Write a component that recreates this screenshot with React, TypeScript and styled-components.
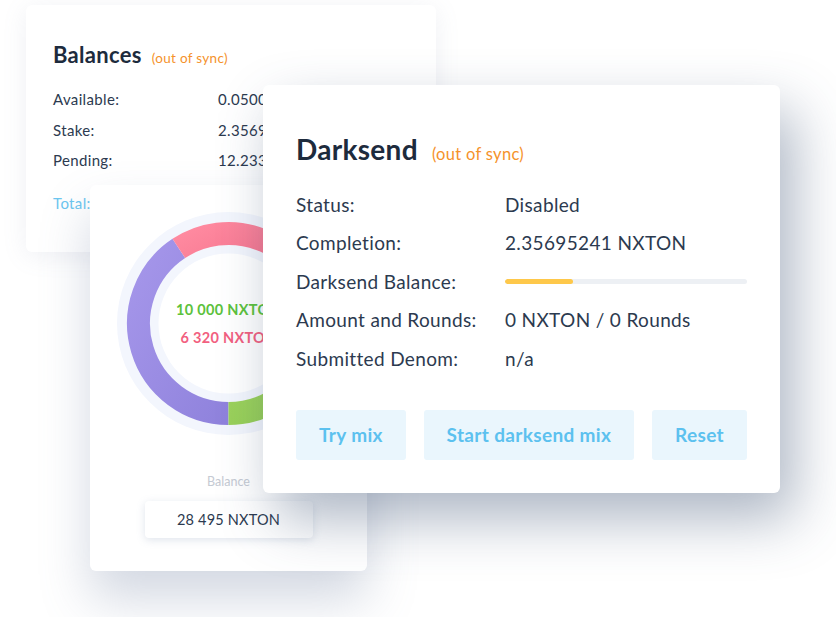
import React from "react";
import styled, { createGlobalStyle } from "styled-components";

const Global = createGlobalStyle`
  html, body { margin: 0; padding: 0; background: #ffffff; }
  body { font-family: Lato, "Open Sans", sans-serif; color: #2c3a4f; }
`;

const Stage = styled.div`
  position: relative;
  width: 836px;
  height: 617px;
  overflow: hidden;
  background: #ffffff;
`;

const Card = styled.div<{ $x: number; $y: number; $w: number; $h: number; $z: number }>`
  position: absolute;
  left: ${(p) => p.$x}px;
  top: ${(p) => p.$y}px;
  width: ${(p) => p.$w}px;
  height: ${(p) => p.$h}px;
  z-index: ${(p) => p.$z};
  background: #ffffff;
  border-radius: 6px;
  box-sizing: border-box;
`;

const BalancesCard = styled(Card)`
  padding: 37px 27px 0 27px;
  box-shadow: 0 4px 24px rgba(120, 135, 165, 0.12);
`;

const ChartCard = styled(Card)`
  display: flex;
  flex-direction: column;
  align-items: center;
  padding-top: 27px;
  box-shadow: 0 28px 50px rgba(110, 125, 160, 0.3);
`;

const DarkCard = styled(Card)`
  padding: 47px 33px 33px 33px;
  display: flex;
  flex-direction: column;
  box-shadow: 14px 26px 56px rgba(60, 80, 115, 0.42);
`;

const TitleRow = styled.div`
  display: flex;
  align-items: baseline;
`;

const Title = styled.h2<{ $size: number }>`
  margin: 0;
  font-size: ${(p) => p.$size}px;
  line-height: ${(p) => Math.round(p.$size * 1.2)}px;
  font-weight: 700;
  letter-spacing: 0.3px;
  color: #1d2b3d;
`;

const Sync = styled.span<{ $size: number; $gap: number }>`
  margin-left: ${(p) => p.$gap}px;
  font-size: ${(p) => p.$size}px;
  letter-spacing: 0.3px;
  color: #f5922b;
`;

const InfoGrid = styled.div<{ $col: number; $row: number; $size: number; $top: number }>`
  display: grid;
  grid-template-columns: ${(p) => p.$col}px 1fr;
  grid-auto-rows: ${(p) => p.$row}px;
  align-items: center;
  margin-top: ${(p) => p.$top}px;
  font-size: ${(p) => p.$size}px;
  letter-spacing: 0.35px;
  color: #2c3a4f;
  white-space: nowrap;
`;

const Cell = styled.div<{ $accent?: boolean }>`
  color: ${(p) => (p.$accent ? "#6cc6ef" : "inherit")};
`;

const TotalGrid = styled(InfoGrid)``;

const Track = styled.div`
  height: 5px;
  border-radius: 3px;
  background: #edf0f4;
  overflow: hidden;
`;

const Fill = styled.div`
  height: 100%;
  border-radius: 3px;
  background: #fec84a;
`;

const Buttons = styled.div`
  display: flex;
  justify-content: space-between;
  margin-top: 32px;
`;

const Button = styled.button`
  height: 50px;
  padding: 0 23px;
  border: none;
  border-radius: 3px;
  background: #eaf6fd;
  color: #5cc1ef;
  font-family: Lato, "Open Sans", sans-serif;
  font-size: 19px;
  letter-spacing: 0.35px;
  font-weight: 700;
  cursor: pointer;
`;

const DonutWrap = styled.div`
  position: relative;
  width: 223px;
  height: 223px;
`;

const DonutText = styled.div`
  position: absolute;
  inset: 0;
  display: flex;
  flex-direction: column;
  align-items: center;
  justify-content: center;
  gap: 10px;
  font-size: 14.5px;
  letter-spacing: 0.3px;
  font-weight: 700;
`;

const Amount = styled.div<{ $color: string }>`
  color: ${(p) => p.$color};
  line-height: 18px;
`;

const BalanceLabel = styled.div`
  margin-top: 39px;
  font-size: 12.5px;
  color: #c5cad3;
  line-height: 15px;
`;

const BalanceBox = styled.div`
  margin-top: 12px;
  width: 168px;
  height: 37px;
  display: flex;
  align-items: center;
  justify-content: center;
  border-radius: 4px;
  background: #ffffff;
  box-shadow: 0 2px 8px rgba(110, 130, 170, 0.22);
  font-size: 14.5px;
  letter-spacing: 0.2px;
  color: #2c3a4f;
`;

function arc(cx: number, cy: number, r: number, a0: number, a1: number) {
  const p = (a: number) => {
    const rad = ((a - 90) * Math.PI) / 180;
    return [cx + r * Math.cos(rad), cy + r * Math.sin(rad)];
  };
  let sweep = a1 - a0;
  if (sweep < 0) sweep += 360;
  const [x0, y0] = p(a0);
  const [x1, y1] = p(a1);
  return `M ${x0} ${y0} A ${r} ${r} 0 ${sweep > 180 ? 1 : 0} 1 ${x1} ${y1}`;
}

const Donut = () => {
  const c = 111.5;
  const r = 90;
  return (
    <DonutWrap>
      <svg width="223" height="223" viewBox="0 0 223 223">
        <defs>
          <linearGradient id="gp" x1="0" y1="0" x2="1" y2="1">
            <stop offset="0" stopColor="#a596ea" />
            <stop offset="1" stopColor="#8f82dc" />
          </linearGradient>
          <linearGradient id="gk" x1="0" y1="0" x2="1" y2="1">
            <stop offset="0" stopColor="#ff8aa0" />
            <stop offset="1" stopColor="#ec5f7d" />
          </linearGradient>
          <linearGradient id="gg" x1="0" y1="0" x2="1" y2="1">
            <stop offset="0" stopColor="#a6d863" />
            <stop offset="1" stopColor="#8fcb52" />
          </linearGradient>
        </defs>
        <circle cx={c} cy={c} r={111.5} fill="#f3f6fd" />
        <path d={arc(c, c, r, 180, 326.5)} stroke="url(#gp)" strokeWidth="23" fill="none" />
        <path d={arc(c, c, r, 326.5, 80)} stroke="url(#gk)" strokeWidth="23" fill="none" />
        <path d={arc(c, c, r, 80, 180)} stroke="url(#gg)" strokeWidth="23" fill="none" />
        <circle cx={c} cy={c} r={70} fill="#ffffff" />
      </svg>
      <DonutText>
        <Amount $color="#5cc23c">10 000 NXTON</Amount>
        <Amount $color="#f2607f">6 320 NXTON</Amount>
      </DonutText>
    </DonutWrap>
  );
};

const balances = [
  ["Available:", "0.05000000 NXTON"],
  ["Stake:", "2.35695241 NXTON"],
  ["Pending:", "12.23300000 NXTON"],
];

export default function App() {
  const progress = 28;
  return (
    <Stage>
      <Global />
      <BalancesCard $x={26} $y={5} $w={410} $h={247} $z={1}>
        <TitleRow>
          <Title $size={22}>Balances</Title>
          <Sync $size={13.5} $gap={10}>(out of sync)</Sync>
        </TitleRow>
        <InfoGrid $col={165} $row={30.5} $size={15} $top={16}>
          {balances.map(([l, v]) => (
            <React.Fragment key={l}>
              <Cell>{l}</Cell>
              <Cell>{v}</Cell>
            </React.Fragment>
          ))}
        </InfoGrid>
        <TotalGrid $col={165} $row={30.5} $size={15} $top={12}>
          <Cell $accent>Total:</Cell>
          <Cell $accent>14.63995241 NXTON</Cell>
        </TotalGrid>
      </BalancesCard>

      <ChartCard $x={90} $y={185} $w={277} $h={386} $z={2}>
        <Donut />
        <BalanceLabel>Balance</BalanceLabel>
        <BalanceBox>28 495 NXTON</BalanceBox>
      </ChartCard>

      <DarkCard $x={263} $y={85} $w={517} $h={408} $z={3}>
        <TitleRow>
          <Title $size={28}>Darksend</Title>
          <Sync $size={16.5} $gap={14}>(out of sync)</Sync>
        </TitleRow>
        <InfoGrid $col={209} $row={38.5} $size={19} $top={19}>
          <Cell>Status:</Cell>
          <Cell>Disabled</Cell>
          <Cell>Completion:</Cell>
          <Cell>2.35695241 NXTON</Cell>
          <Cell>Darksend Balance:</Cell>
          <Track>
            <Fill style={{ width: `${progress}%` }} />
          </Track>
          <Cell>Amount and Rounds:</Cell>
          <Cell>0 NXTON / 0 Rounds</Cell>
          <Cell>Submitted Denom:</Cell>
          <Cell>n/a</Cell>
        </InfoGrid>
        <Buttons>
          <Button>Try mix</Button>
          <Button>Start darksend mix</Button>
          <Button>Reset</Button>
        </Buttons>
      </DarkCard>
    </Stage>
  );
}
